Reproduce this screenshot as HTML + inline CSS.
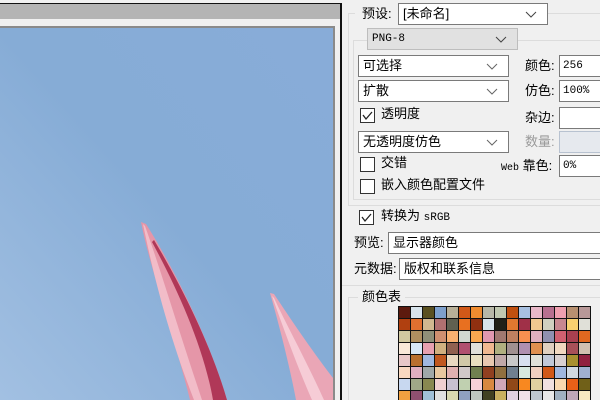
<!DOCTYPE html>
<html style="overflow:hidden;width:600px;height:400px"><head><meta charset="utf-8"><style>
*{margin:0;padding:0;box-sizing:border-box}
body{width:600px;height:400px;overflow:hidden;background:#f0f0f0;position:relative;font-family:"Liberation Sans","Noto Sans CJK SC",sans-serif;font-size:13px;color:#000}
.a{position:absolute}
.dd{position:absolute;background:#fff;border:1px solid #7a7a7a;height:22px;line-height:20px;padding-left:4px;white-space:nowrap;overflow:hidden}
.dd svg{position:absolute;right:10px;top:7px}
.lb{position:absolute;line-height:16px;white-space:nowrap}
.in{position:absolute;background:#fff;border:1px solid #7a7a7a;height:22px;line-height:20px;padding-left:3px;font-size:11px;font-family:"Liberation Mono",monospace;overflow:hidden}
.cb{position:absolute;width:15px;height:15px;background:#fff;border:1px solid #333}
.gl{position:absolute;border:1px solid #dcdcdc}
#clip{position:absolute;left:0;top:0;width:600px;height:400px;overflow:hidden}
</style></head><body><div id="clip">
<div class="a" style="left:0;top:3px;width:341px;height:1px;background:#111"></div>
<div class="a" style="left:0;top:4px;width:340px;height:15px;background:#b4b4b4"></div>
<div class="a" style="left:340px;top:3px;width:2px;height:397px;background:#111"></div>
<div class="a" style="left:0;top:26px;width:335px;height:2px;background:#8a8a8a"></div>
<div class="a" style="left:333px;top:26px;width:2px;height:374px;background:#8a8a8a"></div>
<svg class="a" style="left:0;top:28px" width="333" height="372">
<defs><linearGradient id="g" x1="0" y1="1" x2="1" y2="0"><stop offset="0" stop-color="#a2c0e2"/><stop offset=".5" stop-color="#86acd6"/><stop offset="1" stop-color="#88acd8"/></linearGradient></defs>
<rect width="333" height="372" fill="url(#g)"/>
<path d="M141 194 C150 240 172 300 190 372 L227 372 C212 320 180 250 146 196 Z" fill="#e596a8"/>
<path d="M152 214 C178 262 204 320 213 372 L227 372 C212 320 184 262 154 212 Z" fill="#b03858"/>
<path d="M143 196 C152 240 166 300 194 372 L202 372 C178 300 160 240 145 198 Z" fill="#f2bcc8"/>
<path d="M270 265 C280 300 290 340 296 372 L333 372 L333 350 C310 320 290 290 274 266 Z" fill="#eaa6b6"/>
<path d="M272 268 C285 305 300 345 312 372 L324 372 C305 330 288 300 274 270 Z" fill="#f6ccd6"/>
</svg>
<div class="gl" style="left:348px;top:13px;width:260px;height:193px"></div>
<div class="a" style="left:355px;top:5px;width:192px;height:20px;background:#f0f0f0"></div>
<div class="lb" style="left:362px;top:6px">预设:</div>
<div class="dd" style="left:398px;top:3px;width:150px">[未命名]<svg width="12" height="7"><path d="M1 1L6 6L11 1" fill="none" stroke="#444"/></svg></div>
<div class="gl" style="left:353px;top:40px;width:260px;height:160px"></div>
<div class="dd" style="left:367px;top:28px;width:151px;background:#e1e1e1;border-color:#bdbdbd;font-family:'Liberation Mono',monospace;font-size:11px">PNG-8<svg width="12" height="7"><path d="M1 1L6 6L11 1" fill="none" stroke="#444"/></svg></div>
<div class="dd" style="left:358px;top:55px;width:151px">可选择<svg width="12" height="7"><path d="M1 1L6 6L11 1" fill="none" stroke="#666"/></svg></div>
<div class="lb" style="left:525px;top:58px">颜色:</div>
<div class="in" style="left:559px;top:55px;width:45px">256</div>
<div class="dd" style="left:358px;top:80px;width:151px">扩散<svg width="12" height="7"><path d="M1 1L6 6L11 1" fill="none" stroke="#666"/></svg></div>
<div class="lb" style="left:525px;top:83px">仿色:</div>
<div class="in" style="left:559px;top:80px;width:45px">100%</div>
<div class="cb" style="left:360px;top:108px"><svg width="13" height="13" style="position:absolute;left:0;top:0"><path d="M2 6L5 10L11 3" fill="none" stroke="#222" stroke-width="1.3"/></svg></div>
<div class="lb" style="left:381px;top:106px">透明度</div>
<div class="lb" style="left:525px;top:110px">杂边:</div>
<div class="in" style="left:559px;top:107px;width:45px"></div>
<div class="dd" style="left:358px;top:131px;width:151px">无透明度仿色<svg width="12" height="7"><path d="M1 1L6 6L11 1" fill="none" stroke="#666"/></svg></div>
<div class="lb" style="left:525px;top:134px;color:#9a9a9a">数量:</div>
<div class="in" style="left:559px;top:131px;width:45px;background:#e6e9ee;border-color:#b8c2d0"></div>
<div class="cb" style="left:360px;top:157px"></div>
<div class="lb" style="left:381px;top:155px">交错</div>
<div class="lb" style="left:501px;top:158px"><span style="font-family:'Liberation Mono',monospace;font-size:10px">Web</span> 靠色:</div>
<div class="in" style="left:559px;top:155px;width:45px">0%</div>
<div class="cb" style="left:360px;top:179px"></div>
<div class="lb" style="left:381px;top:177px">嵌入颜色配置文件</div>
<div class="cb" style="left:359px;top:210px"><svg width="13" height="13" style="position:absolute;left:0;top:0"><path d="M2 6L5 10L11 3" fill="none" stroke="#222" stroke-width="1.3"/></svg></div>
<div class="lb" style="left:381px;top:208px">转换为 <span style="font-family:'Liberation Mono',monospace;font-size:11px">sRGB</span></div>
<div class="lb" style="left:354px;top:235px">预览:</div>
<div class="dd" style="left:388px;top:232px;width:220px">显示器颜色</div>
<div class="lb" style="left:354px;top:261px">元数据:</div>
<div class="dd" style="left:399px;top:258px;width:210px">版权和联系信息</div>
<div class="a" style="left:342px;top:285px;width:258px;height:1px;background:#dcdcdc"></div>
<div class="gl" style="left:348px;top:297px;width:260px;height:120px"></div>
<div class="lb" style="left:358px;top:289px;background:#f0f0f0;padding:0 4px">颜色表</div>
<svg class="a" style="left:398px;top:306px" width="193" height="94" id="ct"></svg>
</div>
<script>
var rows=[
"5c1a0e d8e4ec 5a5020 7ea0cc b8b098 d05818 f08c30 b8b8a8 c0c8b0 c05010 a8c0e0 e8b8c8 b87090 f0a0b0 b89070 b89898",
"b04010 e07030 d0b890 b07070 606050 e87020 903010 d8e4ec 202018 e07830 a03048 f0c890 d0d0c0 c88890 f8d070 e0e0d8",
"d0c8a0 b09060 909078 d09070 f8b070 d0d8d0 f8a850 e098b0 a07870 c08060 f89050 e0b0c0 9090b0 d06070 a84050 e06820",
"f8e8d8 d8e8f8 e8a0b0 d0b080 906050 b05070 e0e0d8 f0b890 b0b080 a09090 b090b0 e09050 e0d0c0 f0d8c0 a85058 d0c0b0",
"e8c8c8 b87030 a0b8e0 c05820 e8d8c0 d0c8a8 e8e0c0 e8c8b0 c0a8a8 c8c8c8 d8e0f0 e0e0d8 c0c8d8 d8d0d0 a89030 902040",
"f8d8c0 e0b0c0 a0a8a8 e8c8a0 e0b0b0 d0c8c8 708050 904020 907040 708090 d8e8e0 f0d0c0 d05818 a0b8e0 d0d8e0 a0b0d0",
"c8d8f0 a0a888 888850 f0d0d0 c8c0d0 c0d0b0 f8d0d8 d88840 d0a8b8 904818 f88820 e0d0a0 f0e0e0 f8d8b0 e86018 706018",
"f0a040 905070 a0c0d8 e0e0e0 d8d8b0 90a0c0 c0c8c0 404020 c8b060 e0d0e0 f0e0e8 c0c8d0 e8e8e8 a0b0c0 c0a8b8 f8e8c0"];
var s='<rect width="193" height="94" fill="#111"/>';
rows.forEach(function(r,i){r.split(' ').forEach(function(c,j){s+='<rect x="'+(j*12+1)+'" y="'+(i*12+1)+'" width="11" height="11" fill="#'+c+'"/>';});});
document.getElementById('ct').innerHTML=s;
</script>
</body></html>
